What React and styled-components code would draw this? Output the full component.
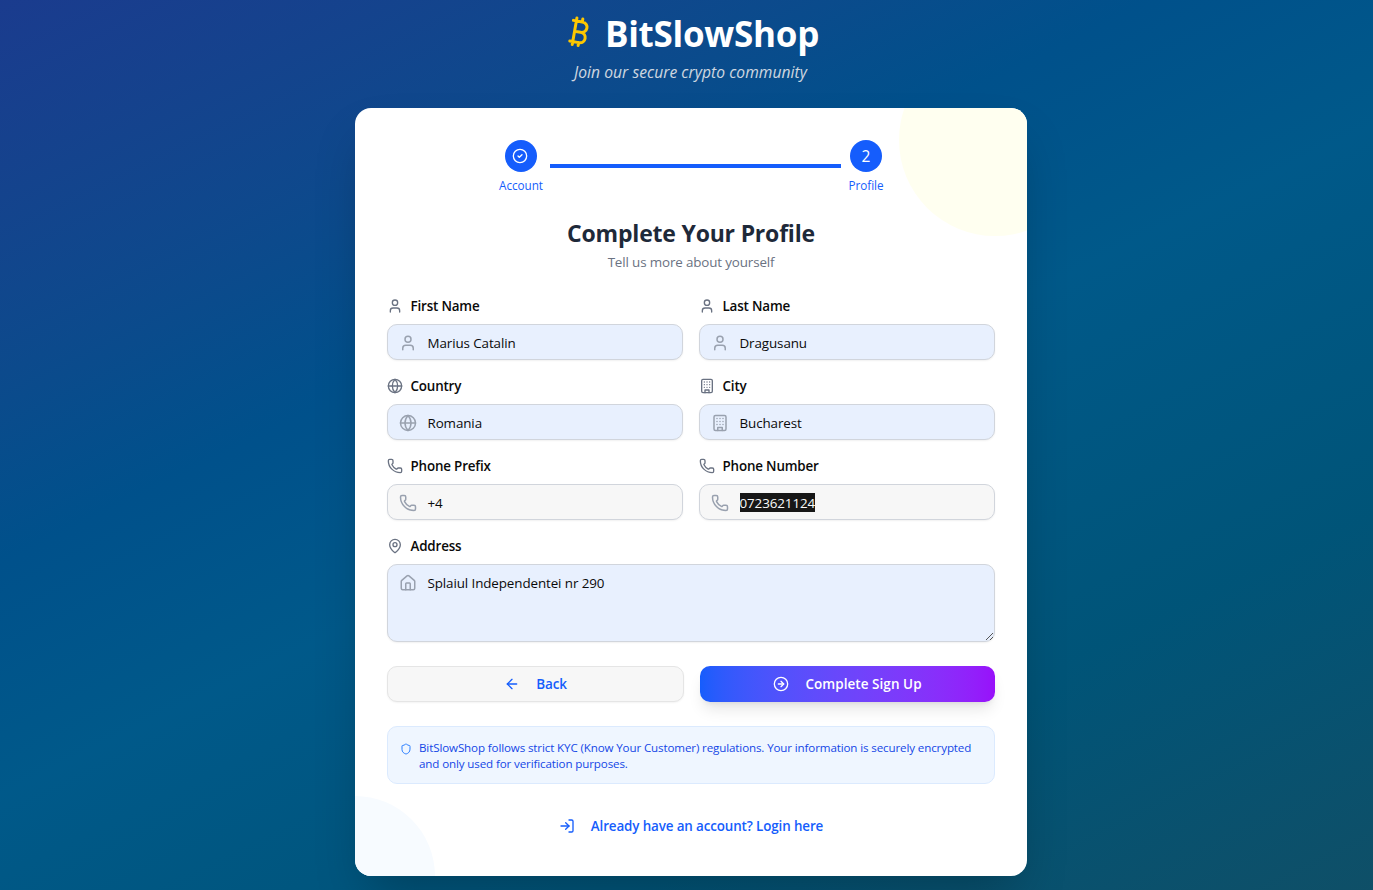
import React from 'react';
import styled, { createGlobalStyle, css } from 'styled-components';
import { Bitcoin, User, Globe, Phone, MapPin, House, ArrowLeft, Shield, LogIn, CircleArrowRight, CircleCheck } from 'lucide-react';

const Global = createGlobalStyle`
  *, *::before, *::after { box-sizing: border-box; }
  body { margin: 0; overflow: hidden; font-family: "Segoe UI", "Open Sans", "Noto Sans", sans-serif; }
  h1, h2, p { margin: 0; }
  svg { display: block; flex: none; }
`;

const Page = styled.div`
  height: 890px;
  overflow: hidden;
  display: flex;
  flex-direction: column;
  align-items: center;
  padding: 14px 0 0 9px;
  background: linear-gradient(154deg in oklab, oklch(0.379 0.146 265.522) -4%, oklch(0.443 0.11 240.79) 51%, oklch(0.398 0.07 227.392) 104%);
`;

const Brand = styled.header`
  display: flex;
  flex-direction: column;
  align-items: center;
  height: 94px;
`;
const BrandRow = styled.div`
  display: flex;
  align-items: center;
  gap: 8px;
  height: 40px;
  margin-right: 2px;
  color: #fdc700;
  svg { margin-bottom: 4px; }
`;
const Title = styled.h1`
  color: #fff;
  font-size: 35px;
  line-height: 40px;
  font-weight: 700;
  letter-spacing: -0.27px;
`;
const Tagline = styled.p`
  margin: 6px 1px 0 0;
  color: #e5e7eb;
  opacity: .9;
  font-size: 15.6px;
  line-height: 24px;
  font-style: italic;
  letter-spacing: 0.06px;
`;

const CardShadow = styled.div`
  border-radius: 16px;
  box-shadow: 0 25px 50px -12px rgba(0, 0, 0, .25);
`;
const Card = styled.main`
  position: relative;
  overflow: hidden;
  width: 672px;
  height: 768px;
  flex: none;
  border-radius: 16px;
  background: #fff;
  padding: 32px;
`;
const Blob = styled.div`
  position: absolute;
  border-radius: 50%;
  ${(p) => p.$corner === 'top'
    ? css`width: 192px; height: 192px; top: -64px; right: -64px; background: #fffff0;`
    : css`width: 160px; height: 160px; bottom: -80px; left: -80px; background: #f7fbff;`}
`;
const Content = styled.div`
  position: relative;
  display: flex;
  flex-direction: column;
`;

const Steps = styled.div`
  display: flex;
  justify-content: center;
  align-items: center;
  height: 52px;
`;
const Step = styled.div`
  display: flex;
  flex-direction: column;
  align-items: center;
  width: ${(p) => p.$w}px;
  height: 52px;
  color: #155dfc;
  font-size: 11.7px;
  line-height: 16px;
  letter-spacing: -0.05px;
  white-space: nowrap;
`;
const Dot = styled.div`
  display: flex;
  flex: none;
  align-items: center;
  justify-content: center;
  width: 32px;
  height: 32px;
  margin-bottom: 5px;
  border-radius: 50%;
  background: #155dfc;
  color: #fff;
  font-size: 15.5px;
  svg { margin-right: 2px; }
`;
const StepLine = styled.div`
  width: 291px;
  height: 4px;
  margin: 0 8px 0 7px;
  background: #155dfc;
`;

const Heading = styled.h2`
  margin-top: 25px;
  text-align: center;
  color: #1e2939;
  font-size: 23px;
  line-height: 32px;
  font-weight: 700;
  letter-spacing: -0.2px;
`;
const SubHeading = styled.p`
  margin-top: 3px;
  text-align: center;
  color: #6a7282;
  font-size: 13.4px;
  line-height: 20px;
  letter-spacing: -0.14px;
`;

const Fields = styled.div`
  display: grid;
  grid-template-columns: 1fr 1fr;
  gap: 16px;
  margin-top: 24px;
`;
const FieldBox = styled.div`
  grid-column: ${(p) => (p.$wide ? '1 / -1' : 'auto')};
`;
const Label = styled.label`
  display: flex;
  align-items: center;
  gap: 7.5px;
  height: 20px;
  margin-bottom: 8px;
  color: #0a0a0a;
  font-size: 13.4px;
  line-height: 20px;
  font-weight: 600;
  letter-spacing: -0.17px;
  svg { color: #6a7282; }
`;
const Control = styled.div`
  position: relative;
  display: flex;
  gap: 10.5px;
  height: ${(p) => (p.$tall ? 78 : 36)}px;
  padding: 8px 11px;
  border: 1px solid #d1d5dc;
  border-radius: 10px;
  background: ${(p) => (p.$filled ? '#e8f0fe' : '#f7f7f7')};
  box-shadow: 0 1px 2px rgba(0, 0, 0, .06);
  color: #99a1af;
  > svg:first-child { margin-top: 1px; }
`;
const Value = styled.span`
  align-self: flex-start;
  height: 19px;
  color: ${(p) => (p.$selected ? '#fafafa' : '#0a0a0a')};
  background: ${(p) => (p.$selected ? '#171717' : 'transparent')};
  font-size: 13.4px;
  line-height: 20px;
  letter-spacing: -0.1px;
  white-space: nowrap;
`;
const Grip = styled.svg`
  position: absolute;
  right: 0;
  bottom: 0;
`;

const Actions = styled.div`
  display: flex;
  gap: 16px;
  margin-top: 24px;
`;
const Button = styled.button`
  display: flex;
  align-items: center;
  justify-content: center;
  gap: 16px;
  height: 36px;
  padding: 0;
  border-radius: 10px;
  font: inherit;
  font-size: 13.5px;
  font-weight: 600;
  ${(p) => p.$primary
    ? css`width: 295px; border: 0; color: #fff; background: linear-gradient(to right in oklab, #155dfc, #9810fa);
        letter-spacing: 0.05px;
        box-shadow: 0 10px 15px -3px rgba(0,0,0,.1), 0 4px 6px -4px rgba(0,0,0,.1);`
    : css`width: 297px; border: 1px solid #e5e5e5; color: #155dfc; background: #f7f7f7; letter-spacing: -0.2px;
        box-shadow: 0 1px 2px rgba(0,0,0,.05);`}
`;

const Notice = styled.div`
  display: flex;
  gap: 7px;
  height: 58px;
  margin-top: 24px;
  padding: 13px 12px;
  border: 1px solid #dbeafe;
  border-radius: 10px;
  background: #eff6ff;
  color: #1447e6;
  font-size: 11.6px;
  line-height: 16px;
  letter-spacing: -0.13px;
  white-space: nowrap;
  svg { margin-top: 3px; color: #2b7fff; }
`;
const LoginLink = styled.a`
  display: flex;
  align-items: center;
  justify-content: center;
  gap: 16px;
  height: 36px;
  margin-top: 24px;
  color: #155dfc;
  font-size: 13.4px;
  font-weight: 600;
  letter-spacing: -0.12px;
`;

function Building({ size, strokeWidth = 2 }) {
  return (
    <svg width={size} height={size} viewBox="0 0 24 24" fill="none" stroke="currentColor" strokeWidth={strokeWidth} strokeLinecap="round" strokeLinejoin="round">
      <rect x="4" y="2" width="16" height="20" rx="2" />
      <path d="M9 22v-4h6v4M8 6h.01M16 6h.01M12 6h.01M12 10h.01M12 14h.01M16 10h.01M16 14h.01M8 10h.01M8 14h.01" />
    </svg>
  );
}

function Field({ label, icon: Icon, inner: Inner = Icon, value, filled, selected, wide }) {
  return (
    <FieldBox $wide={wide}>
      <Label><Icon size={16} />{label}</Label>
      <Control $filled={filled} $tall={wide}>
        <Inner size={18} />
        <Value $selected={selected}>{value}</Value>
        {wide && (
          <Grip width="9" height="9" viewBox="0 0 9 9" stroke="#444" strokeWidth="0.9">
            <path d="M1 8L8 1M5 8L8 5" />
          </Grip>
        )}
      </Control>
    </FieldBox>
  );
}

export default function App() {
  return (
    <>
      <Global />
      <Page>
        <Brand>
          <BrandRow><Bitcoin size={36} /><Title>BitSlowShop</Title></BrandRow>
          <Tagline>Join our secure crypto community</Tagline>
        </Brand>
        <CardShadow>
          <Card>
            <Blob $corner="top" />
            <Blob $corner="bottom" />
            <Content>
              <Steps>
                <Step $w={44}><Dot><CircleCheck size={16} /></Dot>Account</Step>
                <StepLine />
                <Step $w={34}><Dot>2</Dot>Profile</Step>
              </Steps>
              <Heading>Complete Your Profile</Heading>
              <SubHeading>Tell us more about yourself</SubHeading>
              <Fields>
                <Field label="First Name" icon={User} value="Marius Catalin" filled />
                <Field label="Last Name" icon={User} value="Dragusanu" filled />
                <Field label="Country" icon={Globe} value="Romania" filled />
                <Field label="City" icon={Building} value="Bucharest" filled />
                <Field label="Phone Prefix" icon={Phone} value="+4" />
                <Field label="Phone Number" icon={Phone} value="0723621124" selected />
                <Field label="Address" icon={MapPin} inner={House} value="Splaiul Independentei nr 290" filled wide />
              </Fields>
              <Actions>
                <Button><ArrowLeft size={16} />Back</Button>
                <Button $primary><CircleArrowRight size={16} />Complete Sign Up</Button>
              </Actions>
              <Notice>
                <Shield size={12} />
                <p>BitSlowShop follows strict KYC (Know Your Customer) regulations. Your information is securely encrypted<br />and only used for verification purposes.</p>
              </Notice>
              <LoginLink><LogIn size={16} />Already have an account? Login here</LoginLink>
            </Content>
          </Card>
        </CardShadow>
      </Page>
    </>
  );
}
